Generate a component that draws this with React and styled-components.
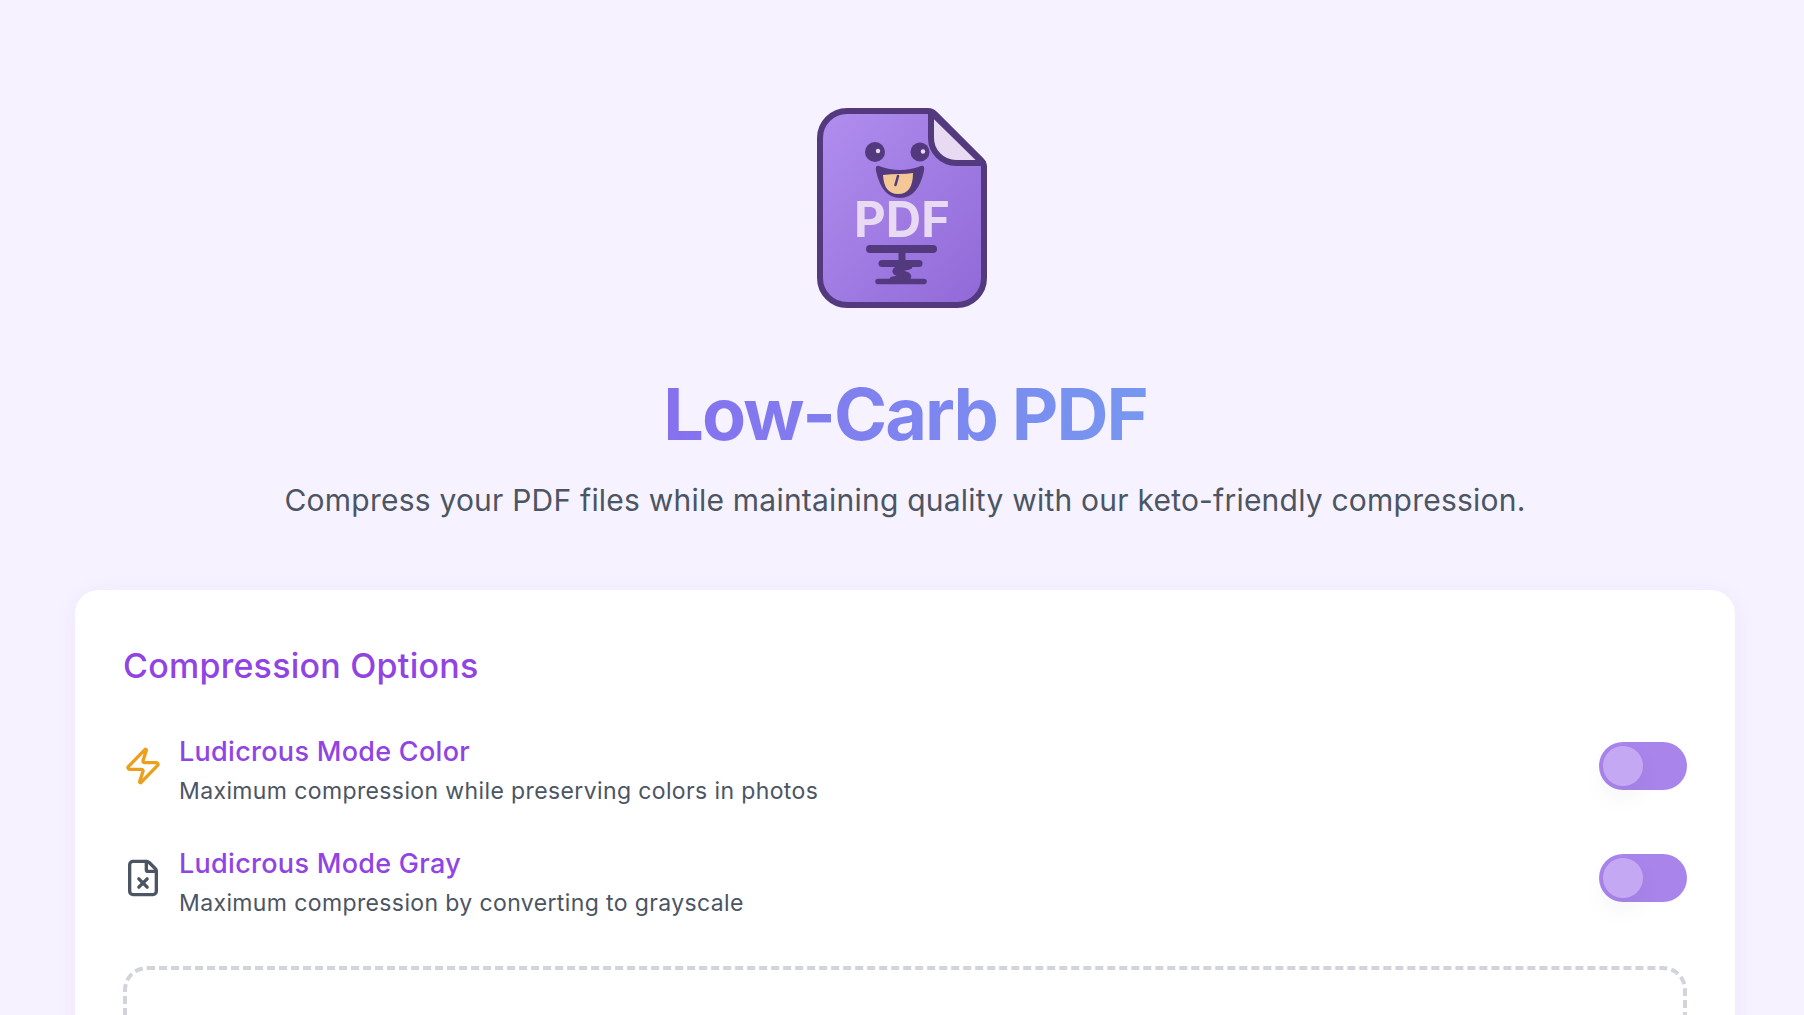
import React from "react";
import styled, { createGlobalStyle } from "styled-components";
import { Zap, FileX } from "lucide-react";

const GlobalStyle = createGlobalStyle`
  * { box-sizing: border-box; }
  html, body {
    margin: 0;
    height: 100%;
    overflow: hidden;
    background: #f6f2ff;
    font-family: Inter, "Liberation Sans", sans-serif;
  }
`;

const Page = styled.div`
  padding: 108px 69px 0 75px;
`;

const Header = styled.header`
  display: flex;
  flex-direction: column;
  align-items: center;
`;

const LogoWrap = styled.div`
  width: 170px;
  height: 200px;
  margin-right: 6px;
`;

const Title = styled.h1`
  margin: 66px 0 0;
  font-size: 72px;
  line-height: 80px;
  font-weight: 700;
  letter-spacing: -0.028em;
  background: linear-gradient(90deg, #8670ee, #7698f0);
  -webkit-background-clip: text;
  background-clip: text;
  color: transparent;
`;

const Tagline = styled.p`
  margin: 26px 0 0;
  font-size: 30px;
  line-height: 40px;
  letter-spacing: 0.22px;
  color: #4b5563;
`;

const Card = styled.section`
  margin-top: 70px;
  padding: 48px;
  background: #fff;
  border-radius: 24px;
  box-shadow: 0 4px 24px rgba(124, 58, 237, 0.06);
`;

const CardTitle = styled.h2`
  margin: 0 0 40px;
  font-size: 34px;
  line-height: 56px;
  font-weight: 500;
  letter-spacing: 0.24px;
  color: #9044e4;
`;

const OptionList = styled.div`
  display: flex;
  flex-direction: column;
  gap: 39px;
`;

const OptionRow = styled.div`
  display: flex;
  align-items: flex-start;
  gap: 16px;
`;

const IconBox = styled.div`
  width: 40px;
  height: 40px;
  margin-top: 12px;
  display: flex;
  align-items: center;
  justify-content: center;
  color: ${(p) => p.$color};
`;

const OptionText = styled.div`
  flex: 1;
`;

const OptionName = styled.div`
  font-size: 27px;
  line-height: 36px;
  font-weight: 500;
  letter-spacing: 0.29px;
  color: #9044e4;
`;

const OptionHint = styled.div`
  margin-top: 5px;
  font-size: 23px;
  line-height: 32px;
  letter-spacing: 0.38px;
  color: #4b5563;
`;

const Toggle = styled.div`
  width: 88px;
  height: 48px;
  margin-top: 8px;
  padding: 4px;
  border-radius: 24px;
  background: #a985eb;
`;

const Knob = styled.div`
  width: 40px;
  height: 40px;
  border-radius: 50%;
  background: #c4a8f3;
  box-shadow: 0 12px 24px rgba(0, 0, 0, 0.05);
`;

const DropZone = styled.div`
  height: 300px;
  margin-top: 47px;
  border: 4px dashed #d1d5db;
  border-radius: 24px;
`;

const Logo = () => (
  <svg viewBox="0 0 170 200" width="170" height="200">
    <defs>
      <linearGradient id="logoFill" x1="0" y1="0" x2="1" y2="1">
        <stop offset="0" stopColor="#b08eee" />
        <stop offset="1" stopColor="#9169d8" />
      </linearGradient>
    </defs>
    <path
      d="M30 3H111Q115 3 118 6L164 52Q167 55 167 59V170A27 27 0 0 1 140 197H30A27 27 0 0 1 3 170V30A27 27 0 0 1 30 3Z"
      fill="url(#logoFill)"
      stroke="#533a7f"
      strokeWidth="6"
    />
    <path
      d="M114 4L166 55H139A25 25 0 0 1 114 30Z"
      fill="#e8daf3"
      stroke="#533a7f"
      strokeWidth="6"
      strokeLinejoin="round"
    />
    <circle cx="58" cy="44" r="10" fill="#533a7f" />
    <circle cx="103" cy="44" r="9.5" fill="#533a7f" />
    <circle cx="61" cy="43" r="2.2" fill="#e8daf3" />
    <circle cx="106" cy="43.5" r="2.2" fill="#e8daf3" />
    <path
      d="M62 58Q83 66 104 58Q108 57 107 63Q101 90 83 90Q65 90 59 63Q58 57 62 58Z"
      fill="#533a7f"
    />
    <path d="M66 67Q74 66 83 66Q90 66 96 65Q96 86 81 86Q67 86 66 67Z" fill="#f3c896" />
    <path d="M81 68L78.5 77" stroke="#533a7f" strokeWidth="2.5" strokeLinecap="round" />
    <text
      x="85"
      y="129"
      textAnchor="middle"
      fontFamily="Inter, sans-serif"
      fontSize="49"
      fontWeight="700"
      fill="#e8daf3"
    >
      PDF
    </text>
    <g stroke="#533a7f" strokeLinecap="round" fill="none">
      <path d="M53 141H116" strokeWidth="8" />
      <path d="M65 155.5H102" strokeWidth="7" />
      <path d="M61 173.5H107" strokeWidth="5.5" />
      <path d="M85 141V155M92 158Q70 163 85 166Q100 169 76 172" strokeWidth="7" />
    </g>
  </svg>
);

const options = [
  {
    name: "Ludicrous Mode Color",
    hint: "Maximum compression while preserving colors in photos",
    color: "#ed9f1c",
    Icon: Zap,
  },
  {
    name: "Ludicrous Mode Gray",
    hint: "Maximum compression by converting to grayscale",
    color: "#4b5563",
    Icon: FileX,
  },
];

const App = () => (
  <>
    <GlobalStyle />
    <Page>
      <Header>
        <LogoWrap>
          <Logo />
        </LogoWrap>
        <Title>Low-Carb PDF</Title>
        <Tagline>Compress your PDF files while maintaining quality with our keto-friendly compression.</Tagline>
      </Header>
      <Card>
        <CardTitle>Compression Options</CardTitle>
        <OptionList>
          {options.map(({ name, hint, color, Icon }) => (
            <OptionRow key={name}>
              <IconBox $color={color}>
                <Icon size={40} strokeWidth={2} />
              </IconBox>
              <OptionText>
                <OptionName>{name}</OptionName>
                <OptionHint>{hint}</OptionHint>
              </OptionText>
              <Toggle>
                <Knob />
              </Toggle>
            </OptionRow>
          ))}
        </OptionList>
        <DropZone />
      </Card>
    </Page>
  </>
);

export default App;
